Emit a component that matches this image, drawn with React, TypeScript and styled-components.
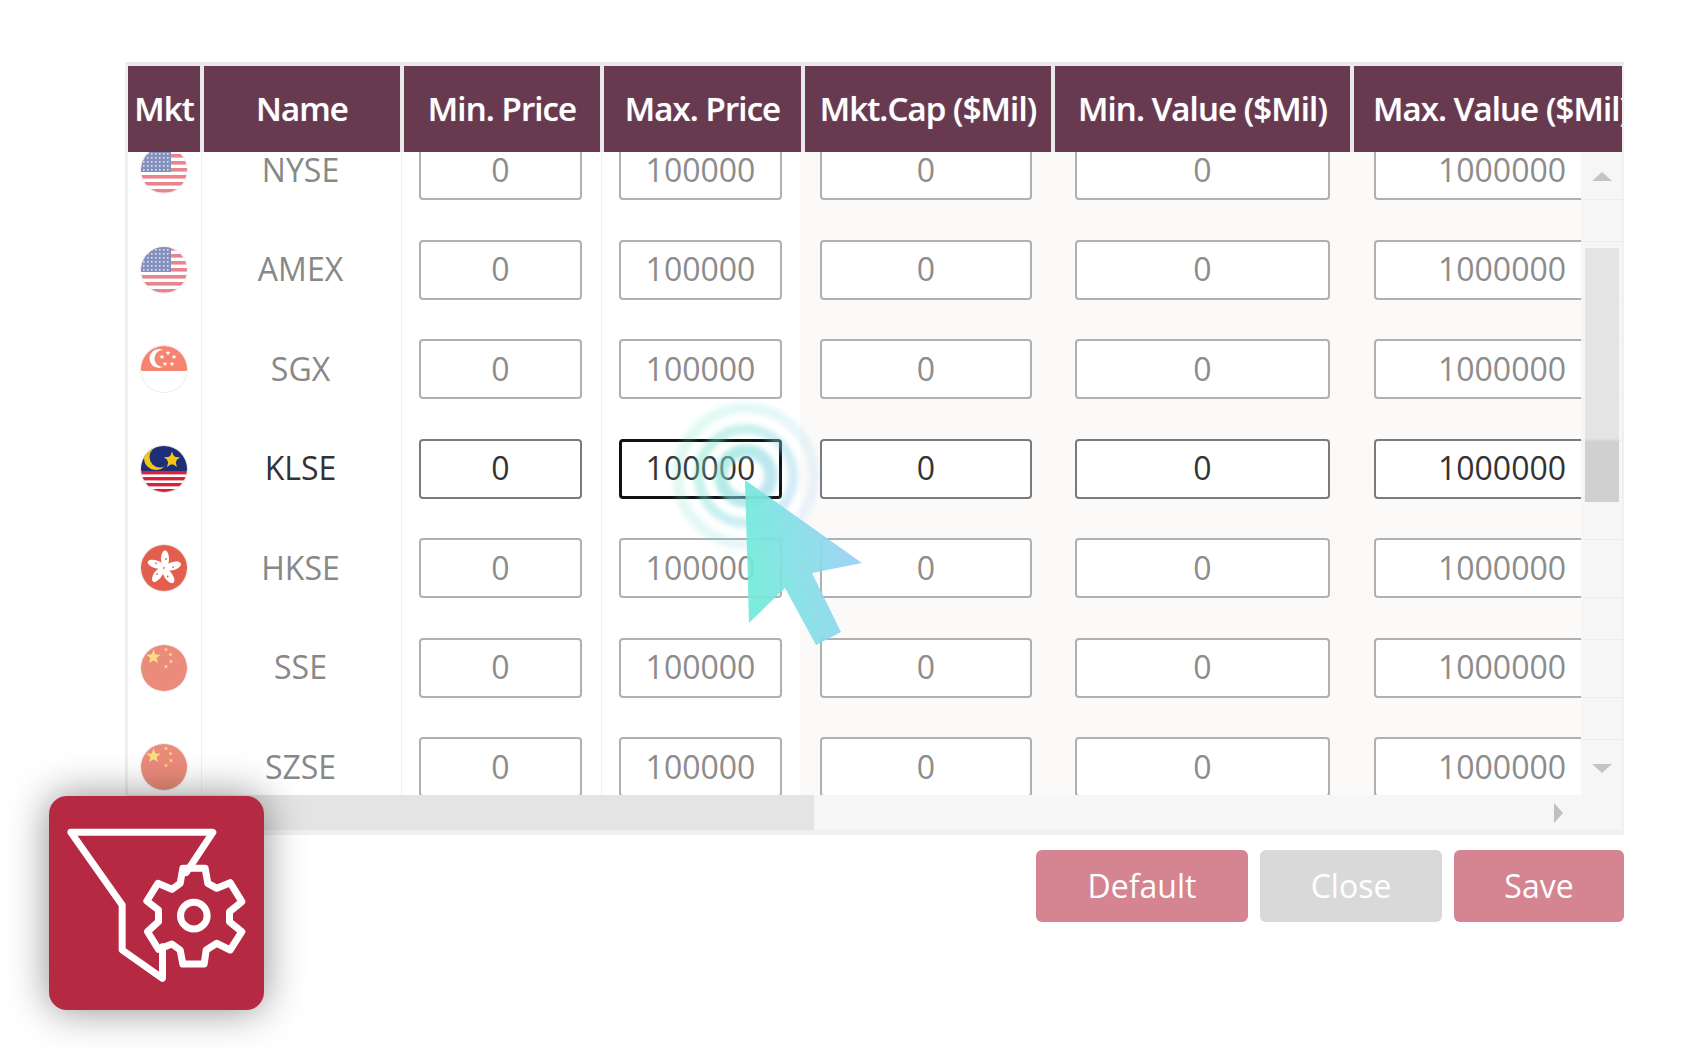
import { FC } from "react";
import styled, { createGlobalStyle } from "styled-components";

const GlobalStyle = createGlobalStyle`
  html, body {
    margin: 0;
    padding: 0;
    background: #fff;
  }
  body {
    font-family: "Open Sans", "Liberation Sans", sans-serif;
  }
`;

type FlagCode = "us" | "sg" | "my" | "hk" | "cn";

interface Market {
  name: string;
  flag: FlagCode;
  active?: boolean;
}

const markets: Market[] = [
  { name: "NYSE", flag: "us" },
  { name: "AMEX", flag: "us" },
  { name: "SGX", flag: "sg" },
  { name: "KLSE", flag: "my", active: true },
  { name: "HKSE", flag: "hk" },
  { name: "SSE", flag: "cn" },
  { name: "SZSE", flag: "cn" },
];

const headers = [
  "Mkt",
  "Name",
  "Min. Price",
  "Max. Price",
  "Mkt.Cap ($Mil)",
  "Min. Value ($Mil)",
  "Max. Value ($Mil)",
];

const fields = [
  { value: "0", width: 163, pad: 17 },
  { value: "100000", width: 163, pad: 17 },
  { value: "0", width: 212, pad: 20, tinted: true },
  { value: "0", width: 255, pad: 22, tinted: true },
  { value: "1000000", width: 256, pad: 22, tinted: true },
];

const star = (cx: number, cy: number, r: number) => {
  const pts: string[] = [];
  for (let i = 0; i < 10; i++) {
    const rad = i % 2 === 0 ? r : r * 0.42;
    const a = -Math.PI / 2 + (i * Math.PI) / 5;
    pts.push(`${cx + rad * Math.cos(a)},${cy + rad * Math.sin(a)}`);
  }
  return pts.join(" ");
};

const UsFlag = () => (
  <svg viewBox="0 0 46 46" width="46" height="46">
    <rect width="46" height="46" fill="#fff" />
    {[0, 7, 14, 21, 28, 35, 42].map((y) => (
      <rect key={y} y={y} width="46" height="3.6" fill="#d9394a" />
    ))}
    <rect width="30" height="25" fill="#3c4f94" />
    {[2, 6, 10, 14, 18, 22].map((y) =>
      [2, 6, 10, 14, 18, 22, 26].map((x) => (
        <rect key={`${x}-${y}`} x={x} y={y} width="1.6" height="1.6" fill="#c9d0e6" />
      ))
    )}
  </svg>
);

const SgFlag = () => (
  <svg viewBox="0 0 46 46" width="46" height="46">
    <rect width="46" height="46" fill="#fff" />
    <rect width="46" height="25" fill="#f4553a" />
    <circle cx="18" cy="12.5" r="9.5" fill="#fff" />
    <circle cx="22" cy="12.5" r="8.5" fill="#f4553a" />
    {[
      [27, 7],
      [33, 11],
      [31, 18],
      [24, 18],
      [21, 11],
    ].map(([x, y]) => (
      <polygon key={x} points={star(x, y, 2.6)} fill="#fff" />
    ))}
  </svg>
);

const MyFlag = () => (
  <svg viewBox="0 0 46 46" width="46" height="46">
    <rect width="46" height="46" fill="#fff" />
    {[25, 31, 37, 43].map((y) => (
      <rect key={y} y={y} width="46" height="3.4" fill="#d8213a" />
    ))}
    <rect width="46" height="25" fill="#1d2f78" />
    <circle cx="15" cy="12" r="12" fill="#f5c518" />
    <circle cx="19" cy="11" r="10.5" fill="#1d2f78" />
    <polygon points={star(31, 14, 8.5)} fill="#f5c518" />
    <circle cx="31" cy="14" r="4.6" fill="#f5c518" />
  </svg>
);

const HkFlag = () => (
  <svg viewBox="0 0 46 46" width="46" height="46">
    <rect width="46" height="46" fill="#df4a36" />
    {[0, 72, 144, 216, 288].map((deg) => (
      <ellipse
        key={deg}
        cx="24"
        cy="14"
        rx="4"
        ry="8.5"
        fill="#fff"
        transform={`rotate(${deg} 23 23)`}
      />
    ))}
    {[0, 72, 144, 216, 288].map((deg) => (
      <circle key={deg} cx="25" cy="14" r="0.9" fill="#df4a36" transform={`rotate(${deg} 23 23)`} />
    ))}
  </svg>
);

const CnFlag = () => (
  <svg viewBox="0 0 46 46" width="46" height="46">
    <rect width="46" height="46" fill="#e2553d" />
    <polygon points={star(12.5, 12, 7.5)} fill="#f8d24a" />
    <polygon points={star(25, 4.5, 2.2)} fill="#f8d24a" />
    <polygon points={star(29.5, 9.5, 2.2)} fill="#f8d24a" />
    <polygon points={star(30, 16.5, 2.2)} fill="#f8d24a" />
    <polygon points={star(25, 21.5, 2.2)} fill="#f8d24a" />
  </svg>
);

const flagArt: Record<FlagCode, FC> = {
  us: UsFlag,
  sg: SgFlag,
  my: MyFlag,
  hk: HkFlag,
  cn: CnFlag,
};

const flagOpacity: Record<FlagCode, number> = {
  us: 0.62,
  sg: 0.72,
  my: 1,
  hk: 0.88,
  cn: 0.68,
};

const MarketRow: FC<{ market: Market }> = ({ market }) => {
  const Art = flagArt[market.flag];
  return (
    <Row>
      <FlagCell>
        <FlagBadge $opacity={flagOpacity[market.flag]}>
          <Art />
        </FlagBadge>
      </FlagCell>
      <NameCell $active={market.active}>{market.name}</NameCell>
      {fields.map((field, i) => (
        <FieldCell key={i} $pad={field.pad} $tinted={field.tinted} $lined={i === 0}>
          <Field
            $width={field.width}
            $active={market.active}
            $focused={market.active && i === 1}
          >
            {field.value}
          </Field>
        </FieldCell>
      ))}
    </Row>
  );
};

const FilterGearIcon = () => (
  <svg viewBox="58 78 642 642" width="100%" height="100%">
    <g fill="none" stroke="#fff" strokeWidth="21" strokeLinejoin="round" strokeLinecap="round">
      <path d="M468 308 L548 187 L122 187 L276 405 L276 540 L397 625 L397 530" />
      <path d="M458 295 L525 295 L533 340 L560 355 L600 338 L635 395 L598 425 L598 455 L635 485 L600 540 L560 520 L528 540 L522 582 L458 582 L450 540 L425 522 L385 538 L352 485 L385 455 L385 420 L350 393 L383 340 L425 358 L450 340 Z" />
      <circle cx="491" cy="437" r="40" />
    </g>
  </svg>
);

const ClickCursor = () => (
  <svg viewBox="660 395 220 260" width="220" height="260">
    <defs>
      <linearGradient id="ringTone" gradientUnits="userSpaceOnUse" x1="680" y1="440" x2="810" y2="500">
        <stop offset="0" stopColor="#66e6bf" />
        <stop offset="1" stopColor="#9fcdf7" />
      </linearGradient>
      <linearGradient id="arrowTone" gradientUnits="userSpaceOnUse" x1="745" y1="540" x2="850" y2="520">
        <stop offset="0" stopColor="#72ead9" />
        <stop offset="1" stopColor="#98d0f6" />
      </linearGradient>
      <filter id="ringBlur" x="-20%" y="-20%" width="140%" height="140%">
        <feGaussianBlur stdDeviation="2.4" />
      </filter>
    </defs>
    <g fill="none" stroke="url(#ringTone)" filter="url(#ringBlur)">
      <circle cx="746" cy="476" r="68" strokeWidth="11" opacity="0.2" />
      <circle cx="746" cy="476" r="47" strokeWidth="10" opacity="0.42" />
      <circle cx="746" cy="476" r="25" strokeWidth="13" opacity="0.58" />
    </g>
    <polygon
      points="745,480 862,563 812,573 841,632 816,645 785,588 749,623"
      fill="url(#arrowTone)"
      opacity="0.92"
    />
  </svg>
);

const App: FC = () => (
  <Page>
    <GlobalStyle />
    <Panel>
      <HeaderRow>
        {headers.map((title, i) => (
          <HeaderCell key={title} $clipped={i === headers.length - 1}>
            {title}
          </HeaderCell>
        ))}
      </HeaderRow>
      <BodyArea>
        <Viewport>
          <Rows>
            {markets.map((market) => (
              <MarketRow key={market.name} market={market} />
            ))}
          </Rows>
        </Viewport>
        <VerticalBar>
          <ArrowUp />
          <VerticalThumb />
          <ArrowDown />
        </VerticalBar>
      </BodyArea>
      <HorizontalBar>
        <HorizontalThumb />
        <ArrowRight />
      </HorizontalBar>
    </Panel>
    <Footer>
      <ActionButton $width={212}>Default</ActionButton>
      <ActionButton $width={182} $muted>
        Close
      </ActionButton>
      <ActionButton $width={170}>Save</ActionButton>
    </Footer>
    <AppBadge>
      <FilterGearIcon />
    </AppBadge>
    <CursorLayer>
      <ClickCursor />
    </CursorLayer>
  </Page>
);

export default App;

const Page = styled.div`
  position: relative;
  width: 1690px;
  height: 1048px;
  padding: 62px 0 0 125px;
  box-sizing: border-box;
  overflow: hidden;
`;

const Panel = styled.div`
  width: 1499px;
  box-sizing: border-box;
  border-top: 4px solid #e9e9e9;
  border-left: 3px solid #f0f0f0;
  border-right: 2px solid #f0f0f0;
  border-bottom: 5px solid #f0f0f0;
`;

const HeaderRow = styled.div`
  display: grid;
  grid-template-columns: 72px 196px 196px 197px 246px 295px 268px;
  column-gap: 4px;
  height: 86px;
  background: #e9e9e9;
`;

const HeaderCell = styled.div<{ $clipped?: boolean }>`
  display: flex;
  align-items: center;
  justify-content: ${(p) => (p.$clipped ? "flex-start" : "center")};
  box-sizing: border-box;
  padding: 0 0 2px ${(p) => (p.$clipped ? "19px" : "0")};
  overflow: hidden;
  white-space: nowrap;
  background: #683a50;
  color: #fff;
  font-size: 33px;
  font-weight: 600;
  letter-spacing: -0.9px;
  text-shadow: 0 0 1px rgba(255, 255, 255, 0.5);
`;

const BodyArea = styled.div`
  display: flex;
  height: 643px;
`;

const Viewport = styled.div`
  width: 1453px;
  height: 100%;
  overflow: hidden;
`;

const Rows = styled.div`
  margin-top: -31.75px;
  width: 1494px;
`;

const Row = styled.div`
  display: grid;
  grid-template-columns: 74px 200px 200px 198px 253px 299px 270px;
  height: 99.5px;
`;

const FlagCell = styled.div`
  display: flex;
  align-items: center;
  padding-left: 13px;
  border-right: 1px solid #f3f3f3;
`;

const FlagBadge = styled.span<{ $opacity: number }>`
  display: block;
  width: 46px;
  height: 46px;
  border-radius: 50%;
  overflow: hidden;
  opacity: ${(p) => p.$opacity};
  box-shadow: 0 0 0 1px #e6e6e6;
`;

const NameCell = styled.div<{ $active?: boolean }>`
  display: flex;
  align-items: center;
  justify-content: center;
  padding: 0 2px 1px 0;
  line-height: 1;
  border-right: 1px solid #f3f3f3;
  color: ${(p) => (p.$active ? "#333333" : "#888888")};
  font-size: 32px;
`;

const FieldCell = styled.div<{ $pad: number; $tinted?: boolean; $lined?: boolean }>`
  display: flex;
  align-items: center;
  padding-left: ${(p) => p.$pad}px;
  background: ${(p) => (p.$tinted ? "#fcfaf9" : "#ffffff")};
  border-right: ${(p) => (p.$lined ? "1px solid #f3f3f3" : "none")};
`;

const Field = styled.div<{ $width: number; $active?: boolean; $focused?: boolean }>`
  flex: none;
  display: flex;
  align-items: center;
  justify-content: center;
  box-sizing: border-box;
  width: ${(p) => p.$width}px;
  height: 60px;
  padding-bottom: 1px;
  line-height: 1;
  background: #fff;
  border: ${(p) =>
    p.$focused ? "3.5px solid #111111" : `2px solid ${p.$active ? "#7a7a7a" : "#b0b0b0"}`};
  border-radius: 4px;
  color: ${(p) => (p.$active ? "#333333" : "#8c8c8c")};
  font-size: 32px;
`;

const VerticalBar = styled.div`
  display: flex;
  flex-direction: column;
  align-items: center;
  width: 41px;
  background-color: #f6f6f6;
  background-image: repeating-linear-gradient(
    to bottom,
    transparent 0,
    transparent 47px,
    #ececec 47px,
    #ececec 48px,
    transparent 48px,
    transparent 89px,
    #ececec 89px,
    #ececec 90px,
    transparent 90px,
    transparent 99.5px
  );
`;

const ArrowUp = styled.span`
  margin-top: 20px;
  border-left: 10px solid transparent;
  border-right: 10px solid transparent;
  border-bottom: 9px solid #c4c4c4;
`;

const VerticalThumb = styled.span`
  width: 34px;
  height: 254px;
  margin-top: 67px;
  background: linear-gradient(to bottom, #e4e4e4 0, #e4e4e4 190px, #d0d0d0 194px, #d0d0d0 100%);
`;

const ArrowDown = styled.span`
  margin-top: auto;
  margin-bottom: 22px;
  border-left: 10px solid transparent;
  border-right: 10px solid transparent;
  border-top: 9px solid #c4c4c4;
`;

const HorizontalBar = styled.div`
  display: flex;
  align-items: center;
  justify-content: space-between;
  height: 35px;
  padding-right: 59px;
  background: #f6f6f6;
`;

const HorizontalThumb = styled.span`
  width: 686px;
  height: 35px;
  background: #e4e4e4;
`;

const ArrowRight = styled.span`
  border-top: 10px solid transparent;
  border-bottom: 10px solid transparent;
  border-left: 9px solid #c0c0c0;
`;

const Footer = styled.div`
  display: flex;
  justify-content: flex-end;
  gap: 12px;
  width: 1499px;
  margin-top: 15px;
`;

const ActionButton = styled.button<{ $width: number; $muted?: boolean }>`
  width: ${(p) => p.$width}px;
  height: 72px;
  padding: 0 0 2px;
  border: none;
  border-radius: 6px;
  background: ${(p) => (p.$muted ? "#d9d9d9" : "#d58492")};
  color: #fff;
  font-family: inherit;
  font-size: 32px;
`;

const AppBadge = styled.div`
  position: absolute;
  left: 49px;
  top: 796px;
  width: 215px;
  height: 214px;
  border-radius: 18px;
  background: #b52a42;
  box-shadow: 0 0 40px rgba(0, 0, 0, 0.45);
`;

const CursorLayer = styled.div`
  position: absolute;
  left: 660px;
  top: 395px;
  width: 220px;
  height: 260px;
  pointer-events: none;
`;
